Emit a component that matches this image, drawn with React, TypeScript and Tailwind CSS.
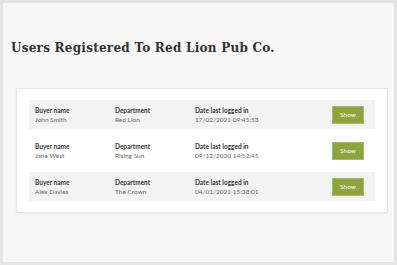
import React from "react";

const rows = [
  { name: "John Smith", dept: "Red Lion", date: "17/02/2021 09:45:53", shaded: true },
  { name: "Jane West", dept: "Rising Sun", date: "09/12/2020 14:52:45", shaded: false },
  { name: "Alex Davies", dept: "The Crown", date: "04/01/2021 15:38:01", shaded: true },
];

export default function App() {
  return (
    <div className="w-[397px] h-[265px] border-[3px] border-[#e4e4e4] bg-[#f7f7f7] flex flex-col" style={{ fontFamily: "Lato, 'Open Sans', sans-serif" }}>
      <h1
        className="pl-[8px] pt-[37px] text-[12px] leading-[16px] font-bold text-[#333] tracking-[0.25px]"
        style={{ fontFamily: "'DejaVu Serif', serif" }}
      >
        Users Registered To Red Lion Pub Co.
      </h1>
      <div className="mt-[32px] ml-[13px] mr-[6px] bg-white border border-[#e6e6e6] shadow-[0_1px_2px_rgba(0,0,0,0.06)] px-[12px] py-[11px] flex flex-col gap-[7px]">
        {rows.map((r) => (
          <div
            key={r.name}
            className={`h-[29px] flex items-center pl-[6px] pr-[11px] ${r.shaded ? "bg-[#f3f3f3]" : "bg-white"}`}
          >
            <div className="w-[80px] flex flex-col">
              <span className="text-[6.5px] leading-[9px] font-bold text-[#333]">Buyer name</span>
              <span className="text-[6.5px] leading-[9px] text-[#666]">{r.name}</span>
            </div>
            <div className="w-[80px] flex flex-col">
              <span className="text-[6.5px] leading-[9px] font-bold text-[#333]">Department</span>
              <span className="text-[6.5px] leading-[9px] text-[#666]">{r.dept}</span>
            </div>
            <div className="flex-1 flex flex-col">
              <span className="text-[6.5px] leading-[9px] font-bold text-[#333]">Date last logged in</span>
              <span className="text-[6.5px] leading-[9px] text-[#666]">{r.date}</span>
            </div>
            <button className="w-[32px] h-[18px] bg-[#8da33d] text-white text-[6.5px] flex items-center justify-center border border-[#a6b86a]">
              Show
            </button>
          </div>
        ))}
      </div>
    </div>
  );
}
